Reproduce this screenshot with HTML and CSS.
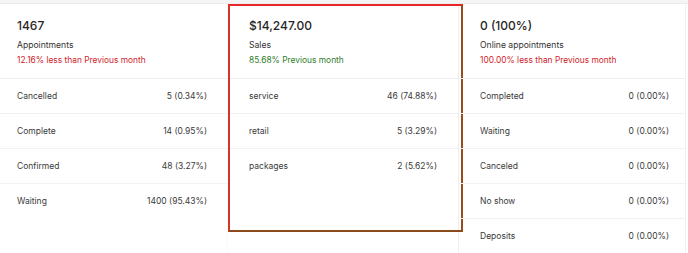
FILE: index.html
```html
<!DOCTYPE html>
<html>
<head>
<meta charset="utf-8">
<link rel="stylesheet" href="styles.css">
</head>
<body>
<div class="page">
  <div class="grid">
    <section class="col col-first">
      <div class="head">
        <div class="big">1467</div>
        <div class="label">Appointments</div>
        <div class="change neg">12.16% less than Previous month</div>
      </div>
      <div class="row"><span>Cancelled</span><span>5 (0.34%)</span></div>
      <div class="row"><span>Complete</span><span>14 (0.95%)</span></div>
      <div class="row"><span>Confirmed</span><span>48 (3.27%)</span></div>
      <div class="row"><span>Waiting</span><span>1400 (95.43%)</span></div>
    </section>
    <section class="col col-mid">
      <div class="head">
        <div class="big">$14,247.00</div>
        <div class="label">Sales</div>
        <div class="change pos">85.68% Previous month</div>
      </div>
      <div class="row"><span>service</span><span>46 (74.88%)</span></div>
      <div class="row"><span>retail</span><span>5 (3.29%)</span></div>
      <div class="row"><span>packages</span><span>2 (5.62%)</span></div>
      <div class="highlight"></div>
    </section>
    <section class="col col-last">
      <div class="head">
        <div class="big">0 (100%)</div>
        <div class="label">Online appointments</div>
        <div class="change neg">100.00% less than Previous month</div>
      </div>
      <div class="row"><span>Completed</span><span>0 (0.00%)</span></div>
      <div class="row"><span>Waiting</span><span>0 (0.00%)</span></div>
      <div class="row"><span>Canceled</span><span>0 (0.00%)</span></div>
      <div class="row"><span>No show</span><span>0 (0.00%)</span></div>
      <div class="row"><span>Deposits</span><span>0 (0.00%)</span></div>
    </section>
  </div>
</div>
</body>
</html>
```

FILE: styles.css
```css
html, body {
  margin: 0;
  padding: 0;
  background: #ffffff;
  font-family: "Inter", "Noto Sans", sans-serif;
  color: #3a3a3a;
}
.page {
  width: 688px;
  height: 253px;
  overflow: hidden;
  background: #ffffff;
  border-top: 3px solid #f4f4f4;
  box-sizing: border-box;
}
.grid {
  display: grid;
  grid-template-columns: 228px 231px 227px;
  border-top: 1px solid #ececec;
}
.col {
  position: relative;
  border-right: 1px solid #f0f0f0;
  height: 260px;
  --pl: 21px;
  --pr: 20px;
}
.col-first { --pl: 17px; --pr: 20px; border-right-color: #fafafa; }
.col-mid { --pl: 21px; --pr: 21px; }
.col-last { --pl: 21px; --pr: 16px; }
.head {
  padding: 14px var(--pr) 11px var(--pl);
  border-bottom: 1px solid #f0f0f0;
}
.big {
  font-size: 12px;
  line-height: 16px;
  font-weight: 500;
  color: #262626;
}
.label {
  margin-top: 4px;
  font-size: 8.6px;
  line-height: 14px;
  color: #333;
}
.change {
  margin-top: 1px;
  font-size: 8.4px;
  line-height: 14px;
}
.neg { color: #d0262b; }
.pos { color: #2f7d2a; }
.row {
  display: flex;
  justify-content: space-between;
  align-items: center;
  height: 34px;
  padding: 0 var(--pr) 0 var(--pl);
  border-bottom: 1px solid #f2f2f2;
  font-size: 8.5px;
  color: #3a3a3a;
}
.col-first .row:last-child,
.col-mid .row:nth-last-child(2) { border-bottom: none; }
.highlight {
  position: absolute;
  left: 0;
  top: 0;
  width: 235px;
  height: 228px;
  box-sizing: border-box;
  border: 2px solid;
  border-color: #e8262a #9a4b1c #8a4a1a #d8352a;
  pointer-events: none;
}
```
